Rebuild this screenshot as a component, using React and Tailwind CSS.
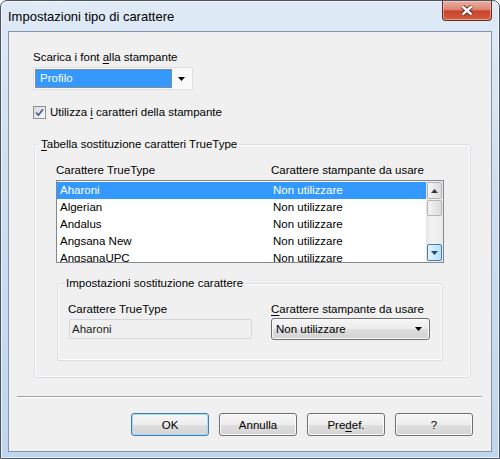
import React from 'react'

const fonts = ['Aharoni', 'Algerian', 'Andalus', 'Angsana New', 'AngsanaUPC']

const Arrow = ({ color = '#000' }) => (
  <svg width="7" height="4" viewBox="0 0 7 4">
    <path d="M0 0h7L3.5 4z" fill={color} />
  </svg>
)

const U = ({ children }) => <span className="underline underline-offset-[2px]">{children}</span>

const CloseButton = () => (
  <div className="mr-[7px] w-[50px] h-[20px] rounded-b-[4px] border border-t-0 border-[#6b2a1f] bg-[linear-gradient(to_bottom,#eab0a2_0%,#de8572_45%,#c9432c_52%,#d25f40_100%)] shadow-[inset_0_0_0_1px_rgba(255,220,210,0.5)] flex items-center justify-center">
    <svg width="14" height="11" viewBox="0 0 14 11">
      <path d="M2.5 1.5L11.5 9.5M11.5 1.5L2.5 9.5" stroke="#4a1e16" strokeWidth="4.2" />
      <path d="M2.5 1.5L11.5 9.5M11.5 1.5L2.5 9.5" stroke="#fff" strokeWidth="2.4" />
    </svg>
  </div>
)

const Checkbox = () => (
  <div className="w-[13px] h-[13px] border border-[#8e8f8f] bg-[linear-gradient(135deg,#d8d8d8,#fafafa)] flex items-center justify-center">
    <svg width="9" height="9" viewBox="0 0 9 9">
      <path d="M1 4.5L3.4 7.2L8 1.2" fill="none" stroke="#4b5f94" strokeWidth="1.8" />
    </svg>
  </div>
)

const ScrollButton = ({ down = false, hot = false }) => (
  <div
    className={`h-[17px] rounded-[2px] border flex items-center justify-center ${
      hot
        ? 'border-[#3c7fb1] bg-[linear-gradient(to_right,#e3f4fc,#b9e0f7)]'
        : 'border-[#b2b2b2] bg-[linear-gradient(to_right,#f4f4f4,#dcdcdc)]'
    }`}
  >
    <div className={down ? '' : 'rotate-180'}>
      <Arrow color={hot ? '#1b4f7a' : '#3a3a3a'} />
    </div>
  </div>
)

const PushButton = ({ children, primary = false }) => (
  <div
    className={`w-[78px] h-[23px] rounded-[3px] border flex items-center justify-center bg-[linear-gradient(to_bottom,#f6f6f6_0%,#ededed_50%,#dfdfdf_51%,#d4d4d4_100%)] ${
      primary
        ? 'border-[#3c7fb1] shadow-[inset_0_0_0_1px_#a8dcf5]'
        : 'border-[#707070] shadow-[inset_0_0_0_1px_#fcfcfc]'
    }`}
  >
    {children}
  </div>
)

export default function App() {
  return (
    <div className="w-[500px] h-[459px] bg-white font-['Liberation_Sans',Arial,sans-serif] text-[11.5px] leading-[16px] text-black">
      <div className="w-[500px] h-[459px] flex flex-col rounded-t-[7px] border border-[#4a5563] bg-[linear-gradient(to_bottom,#dfeaf6,#cfdff0_40%,#c0d6ed)] shadow-[inset_0_0_0_1px_rgba(255,255,255,0.65)]">
        {/* title bar */}
        <div className="h-[30px] flex items-start justify-between">
          <span className="pl-[7px] pt-[7px] text-[13px] leading-[17px]">Impostazioni tipo di carattere</span>
          <CloseButton />
        </div>

        {/* client area */}
        <div className="ml-[7px] w-[484px] h-[421px] border border-[#8594a8] bg-[#f0f0f0] flex flex-col">
          <div className="ml-[24px] mt-[17px]">
            Scarica i font <U>a</U>lla stampante
          </div>

          <div className="ml-[24px] mt-[2px] w-[160px] h-[23px] border border-[#dde1e6] bg-[#fafafa] p-[1px] flex items-center">
            <div className="w-[137px] h-[19px] bg-[#3399ff] border border-dotted border-[#c98436] text-white pl-[4px] leading-[17px]">
              Profilo
            </div>
            <div className="flex-1 flex justify-center pt-[1px]">
              <Arrow />
            </div>
          </div>

          <div className="ml-[24px] mt-[14px] h-[16px] flex items-center gap-[4px]">
            <Checkbox />
            <span>
              Utilizza <U>i</U> caratteri della stampante
            </span>
          </div>

          {/* TrueType table group */}
          <fieldset className="ml-[25px] mt-[16px] w-[437px] h-[242px] rounded-[3px] border border-[#d5dfe5] shadow-[inset_0_0_0_1px_#fdfdfd]">
            <legend className="ml-[4px] px-[2px] leading-[16px]">
              <U>T</U>abella sostituzione caratteri TrueType
            </legend>

            <div className="mt-[10px] ml-[21px] flex">
              <span className="w-[215px]">Carattere TrueType</span>
              <span>Carattere stampante da usare</span>
            </div>

            <div className="mt-[2px] ml-[21px] w-[388px] h-[83px] border border-[#828790] bg-white flex overflow-hidden">
              <div className="flex-1 pt-[1px]">
                {fonts.map((f, i) => (
                  <div
                    key={f}
                    className={`h-[17px] leading-[17px] flex ${i === 0 ? 'bg-[#3399ff] text-white' : ''}`}
                  >
                    <span className="w-[216px] pl-[3px]">{f}</span>
                    <span>Non utilizzare</span>
                  </div>
                ))}
              </div>
              <div className="w-[17px] p-[1px] flex flex-col bg-[linear-gradient(to_right,#e6e6e6,#f3f3f3_40%,#ebebeb)]">
                <ScrollButton />
                <div className="mt-[1px] h-[16px] rounded-[2px] border border-[#b2b2b2] bg-[linear-gradient(to_right,#f4f4f4,#dcdcdc)]" />
                <div className="flex-1" />
                <ScrollButton down hot />
              </div>
            </div>

            {/* substitution settings group */}
            <fieldset className="ml-[22px] mt-[12px] w-[386px] h-[86px] rounded-[3px] border border-[#d5dfe5] shadow-[inset_0_0_0_1px_#fdfdfd]">
              <legend className="ml-[7px] px-[1px] leading-[16px]">Impostazioni sostituzione carattere</legend>
              <div className="mt-[10px] ml-[10px] flex">
                <div className="w-[203px] flex flex-col">
                  <span>Carattere TrueType</span>
                  <div className="mt-[2px] ml-[1px] w-[183px] h-[20px] rounded-[2px] border border-[#d3d7dc] bg-[#f0f0f0] pl-[2px] leading-[18px] text-[#222]">
                    Aharoni
                  </div>
                </div>
                <div className="flex flex-col">
                  <span>
                    <U>C</U>arattere stampante da usare
                  </span>
                  <div className="mt-[1px] w-[159px] h-[22px] rounded-[3px] border border-[#707070] bg-[linear-gradient(to_bottom,#f6f6f6_0%,#ececec_50%,#dedede_51%,#d2d2d2_100%)] shadow-[inset_0_0_0_1px_#fbfbfb] flex items-center pl-[4px] pr-[7px]">
                    <span className="flex-1">Non utilizzare</span>
                    <Arrow />
                  </div>
                </div>
              </div>
            </fieldset>
          </fieldset>

          <div className="ml-[8px] mt-[18px] w-[465px] h-[2px] border-t border-b border-t-[#a0a0a0] border-b-white" />

          <div className="ml-[122px] mt-[15px] flex gap-[10px]">
            <PushButton primary>OK</PushButton>
            <PushButton>Annulla</PushButton>
            <PushButton>
              <span>
                Pre<U>d</U>ef.
              </span>
            </PushButton>
            <PushButton>?</PushButton>
          </div>
        </div>
      </div>
    </div>
  )
}
